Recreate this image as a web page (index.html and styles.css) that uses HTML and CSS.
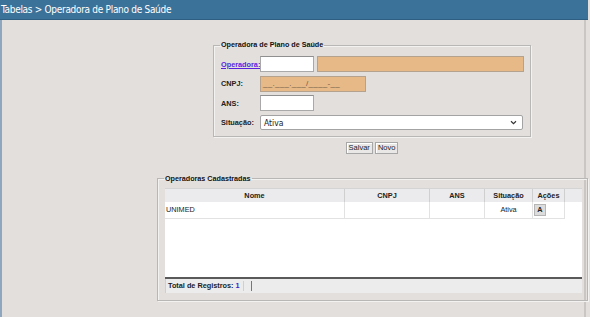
FILE: index.html
```html
<!DOCTYPE html>
<html lang="pt-BR">
<head>
<meta charset="utf-8">
<title>Operadora de Plano de Saúde</title>
<link rel="stylesheet" href="styles.css">
</head>
<body>
<div class="titlebar">Tabelas &gt; Operadora de Plano de Saúde</div>
<div class="page">
  <fieldset class="box form-box">
    <legend>Operadora de Plano de Saúde</legend>
    <div class="form-grid">
      <a class="lbl link" href="#">Operadora:</a>
      <div class="ctl"><span class="inp short"></span><span class="inp orange long"></span></div>
      <span class="lbl">CNPJ:</span>
      <div class="ctl"><span class="inp orange cnpj">__.___.___/____-__</span></div>
      <span class="lbl">ANS:</span>
      <div class="ctl"><span class="inp short"></span></div>
      <span class="lbl">Situação:</span>
      <div class="ctl"><span class="select">Ativa<svg class="chev" viewBox="0 0 8 6" width="7" height="5"><path d="M1 1.5 L4 4.5 L7 1.5" fill="none" stroke="#333" stroke-width="1.4"/></svg></span></div>
    </div>
  </fieldset>
  <div class="buttons">
    <button class="btn">Salvar</button><button class="btn">Novo</button>
  </div>
  <fieldset class="box list-box">
    <legend>Operadoras Cadastradas</legend>
    <div class="grid">
      <div class="ghead">
        <div class="c">Nome</div><div class="c">CNPJ</div><div class="c">ANS</div><div class="c">Situação</div><div class="c">Ações</div><div class="c gutter"></div>
      </div>
      <div class="gbody">
        <div class="grow">
          <div class="c left">UNIMED</div><div class="c"></div><div class="c"></div><div class="c">Ativa</div><div class="c act"><span class="abtn">A</span></div>
        </div>
      </div>
      <div class="gfoot">
        <span class="total">Total de Registros: <span class="num">1</span></span><span class="sep"></span><span class="sep2"></span>
      </div>
    </div>
  </fieldset>
</div>
</body>
</html>
```
FILE: styles.css
```css
html, body {
  margin: 0;
  padding: 0;
  height: 100%;
  background: #e2dfdd;
}
body {
  font-family: "Liberation Sans", Arial, sans-serif;
  overflow: hidden;
}
.titlebar {
  height: 19px;
  background: #3b729a;
  border-bottom: 1px solid #2e5f82;
  color: #ffffff;
  font-family: "DejaVu Sans Condensed", "DejaVu Sans", sans-serif;
  font-size: 10px;
  letter-spacing: -0.3px;
  line-height: 19px;
  padding-left: 1px;
  width: 587px;
}
.page {
  border-left: 2px solid #8fa6bf;
  border-right: 2px solid #c9c6c4;
  width: 586px;
  padding-top: 20px;
  box-sizing: border-box;
  height: 297px;
}
.box {
  margin: 0;
  border: 1px solid #b9b7b5;
  box-shadow: 1px 1px 0 #f3f2f1, inset 1px 1px 0 #f3f2f1;
  padding: 0;
}
.box legend {
  font-size: 7.2px;
  font-weight: bold;
  line-height: 10px;
  padding: 0 1px;
  margin-left: -1px;
  color: #111;
}
.form-box {
  margin-left: 211px;
  width: 318px;
  box-sizing: border-box;
  padding: 6px 6px 5.5px 7px;
}
.form-grid {
  display: grid;
  grid-template-columns: 39px 1fr;
  row-gap: 3.5px;
  align-items: center;
}
.lbl {
  font-size: 7.3px;
  font-weight: bold;
  color: #222;
  white-space: nowrap;
}
.link {
  color: #5a1fe0;
  text-decoration: underline;
}
.ctl {
  display: flex;
  gap: 3px;
  height: 16px;
  align-items: center;
}
.inp {
  box-sizing: border-box;
  height: 16px;
  background: #ffffff;
  border: 1px solid #a9a9a9;
  border-top-color: #8f8f8f;
  font-size: 8px;
  color: #555;
  display: flex;
  align-items: center;
  padding-left: 2px;
}
.short { width: 54px; }
.orange {
  background: #e6b987;
  border-color: #b5a28e;
}
.long { width: 207px; }
.cnpj { width: 106px; letter-spacing: 0.3px; color: #6b5a48; }
.select {
  box-sizing: border-box;
  width: 263px;
  height: 15px;
  background: #fff;
  border: 1px solid #a3a3a3;
  border-radius: 2px;
  font-family: "DejaVu Sans Condensed", "DejaVu Sans", sans-serif;
  font-size: 8.5px;
  color: #222;
  display: flex;
  align-items: center;
  justify-content: space-between;
  padding: 0 5px 0 3px;
}
.buttons {
  margin-left: 211px;
  width: 318px;
  display: flex;
  justify-content: center;
  gap: 2px;
  margin-top: 4.5px;
}
.btn {
  box-sizing: border-box;
  font-family: "Liberation Sans", Arial, sans-serif;
  font-size: 7.5px;
  height: 12px;
  padding: 0 2px;
  margin: 0;
  background: #e9e8e7;
  border: 1px solid #a7a7a7;
  box-shadow: inset 1px 1px 0 #fff;
  color: #222;
  line-height: 10px;
}
.list-box {
  margin-left: 155px;
  margin-top: 20px;
  width: 431px;
  box-sizing: border-box;
  padding: 4px 5px 7px 7px;
}
.grid {
  background: #ffffff;
  font-size: 7.3px;
}
.ghead, .grow {
  display: grid;
  grid-template-columns: 180px 85px 55px 48px 32px 1fr;
}
.ghead {
  background: #ebebed;
  height: 14px;
  border-top: 1px solid #d4d4d4;
  box-sizing: border-box;
}
.ghead .c {
  font-weight: bold;
  text-align: center;
  line-height: 13px;
  border-right: 1px solid #cfcfcf;
  color: #222;
}
.ghead .gutter { border-right: none; }
.gbody {
  height: 77px;
  border-bottom: 2px solid #5a5a5a;
  box-sizing: border-box;
}
.grow {
  height: 17px;
}
.grow .c {
  border-right: 1px solid #e2e2e2;
  border-bottom: 1px solid #e2e2e2;
  text-align: center;
  line-height: 16px;
  color: #222;
}
.grow .left { text-align: left; padding-left: 1px; }
.grow .act { text-align: left; }
.abtn {
  display: inline-block;
  width: 10px;
  height: 10px;
  line-height: 10px;
  text-align: center;
  background: #dcdcdc;
  border: 1px solid #b5b5b5;
  font-weight: bold;
  margin-left: 1px;
}
.gfoot {
  height: 14px;
  background: #ececec;
  border-left: 1px solid #cfcfcf;
  display: flex;
  align-items: center;
  font-weight: bold;
  color: #222;
  padding-left: 2px;
}
.num { color: #3a1fd0; }
.sep {
  width: 1px;
  height: 10px;
  background: #d0d0d0;
  margin-left: 3px;
}
.sep2 {
  width: 1px;
  height: 10px;
  background: #777;
  margin-left: 7px;
}
```
